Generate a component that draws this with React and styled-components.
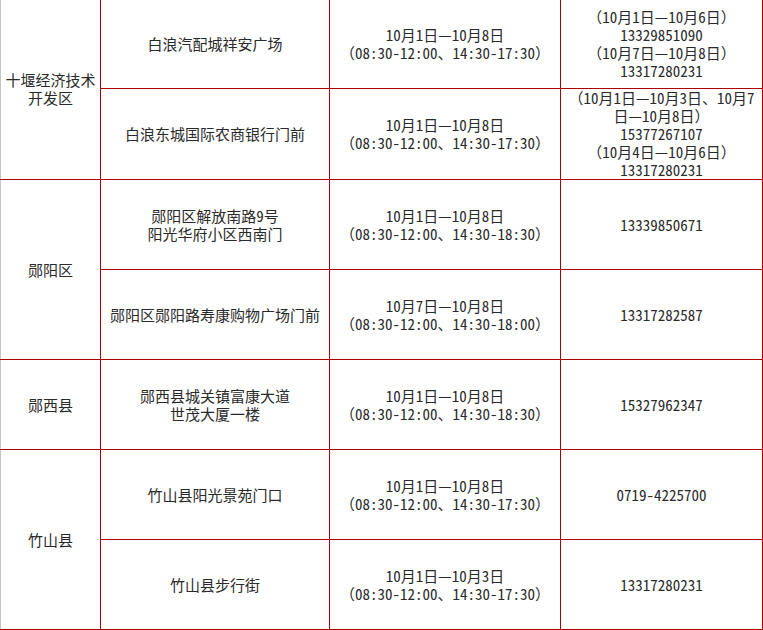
import React from 'react';
import styled, { createGlobalStyle } from 'styled-components';

const GlobalStyle = createGlobalStyle`
  html, body {
    margin: 0;
    padding: 0;
    background: #ffffff;
  }
  body {
    overflow: hidden;
  }
`;

const Page = styled.div`
  width: 763px;
  height: 630px;
  overflow: hidden;
  background: #ffffff;
`;

const Table = styled.table`
  border-collapse: collapse;
  table-layout: fixed;
  width: 762px;
  margin-top: -2px;
  font-family: "Noto Sans Mono CJK SC", "Noto Sans CJK SC", sans-serif;
  font-size: 15px;
  line-height: 18px;
  color: #2a2a2a;
`;

const Col = styled.col`
  width: ${({ $w }) => $w}px;
`;

const Row = styled.tr`
  height: 90px;
`;

const Cell = styled.td`
  border: 1px solid #ac0000;
  border-left-color: ${({ $first }) => ($first ? '#c4c4c4' : '#ac0000')};
  padding: 0 4px;
  text-align: center;
  vertical-align: middle;
  white-space: nowrap;
`;

const time = (d, end) => [d, `（08:30-12:00、14:30-${end}）`];

const rows = [
  {
    area: ['十堰经济技术', '开发区'],
    span: 2,
    place: ['白浪汽配城祥安广场'],
    time: time('10月1日—10月8日', '17:30'),
    phone: ['（10月1日—10月6日）', '13329851090', '（10月7日—10月8日）', '13317280231'],
  },
  {
    place: ['白浪东城国际农商银行门前'],
    time: time('10月1日—10月8日', '17:30'),
    phone: ['（10月1日—10月3日、10月7', '日—10月8日）', '15377267107', '（10月4日—10月6日）', '13317280231'],
  },
  {
    area: ['郧阳区'],
    span: 2,
    place: ['郧阳区解放南路9号', '阳光华府小区西南门'],
    time: time('10月1日—10月8日', '18:30'),
    phone: ['13339850671'],
  },
  {
    place: ['郧阳区郧阳路寿康购物广场门前'],
    time: time('10月7日—10月8日', '18:00'),
    phone: ['13317282587'],
  },
  {
    area: ['郧西县'],
    span: 1,
    place: ['郧西县城关镇富康大道', '世茂大厦一楼'],
    time: time('10月1日—10月8日', '18:30'),
    phone: ['15327962347'],
  },
  {
    area: ['竹山县'],
    span: 2,
    place: ['竹山县阳光景苑门口'],
    time: time('10月1日—10月8日', '17:30'),
    phone: ['0719-4225700'],
  },
  {
    place: ['竹山县步行街'],
    time: time('10月1日—10月3日', '17:30'),
    phone: ['13317280231'],
  },
];

const Lines = ({ items }) =>
  items.map((t, i) => (
    <React.Fragment key={i}>
      {i > 0 && <br />}
      {t}
    </React.Fragment>
  ));

export default function App() {
  return (
    <Page>
      <GlobalStyle />
      <Table>
        <colgroup>
          <Col $w={100} />
          <Col $w={229} />
          <Col $w={231} />
          <Col $w={202} />
        </colgroup>
        <tbody>
          {rows.map((r, i) => (
            <Row key={i}>
              {r.area && (
                <Cell $first rowSpan={r.span}>
                  <Lines items={r.area} />
                </Cell>
              )}
              <Cell>
                <Lines items={r.place} />
              </Cell>
              <Cell>
                <Lines items={r.time} />
              </Cell>
              <Cell>
                <Lines items={r.phone} />
              </Cell>
            </Row>
          ))}
        </tbody>
      </Table>
    </Page>
  );
}
